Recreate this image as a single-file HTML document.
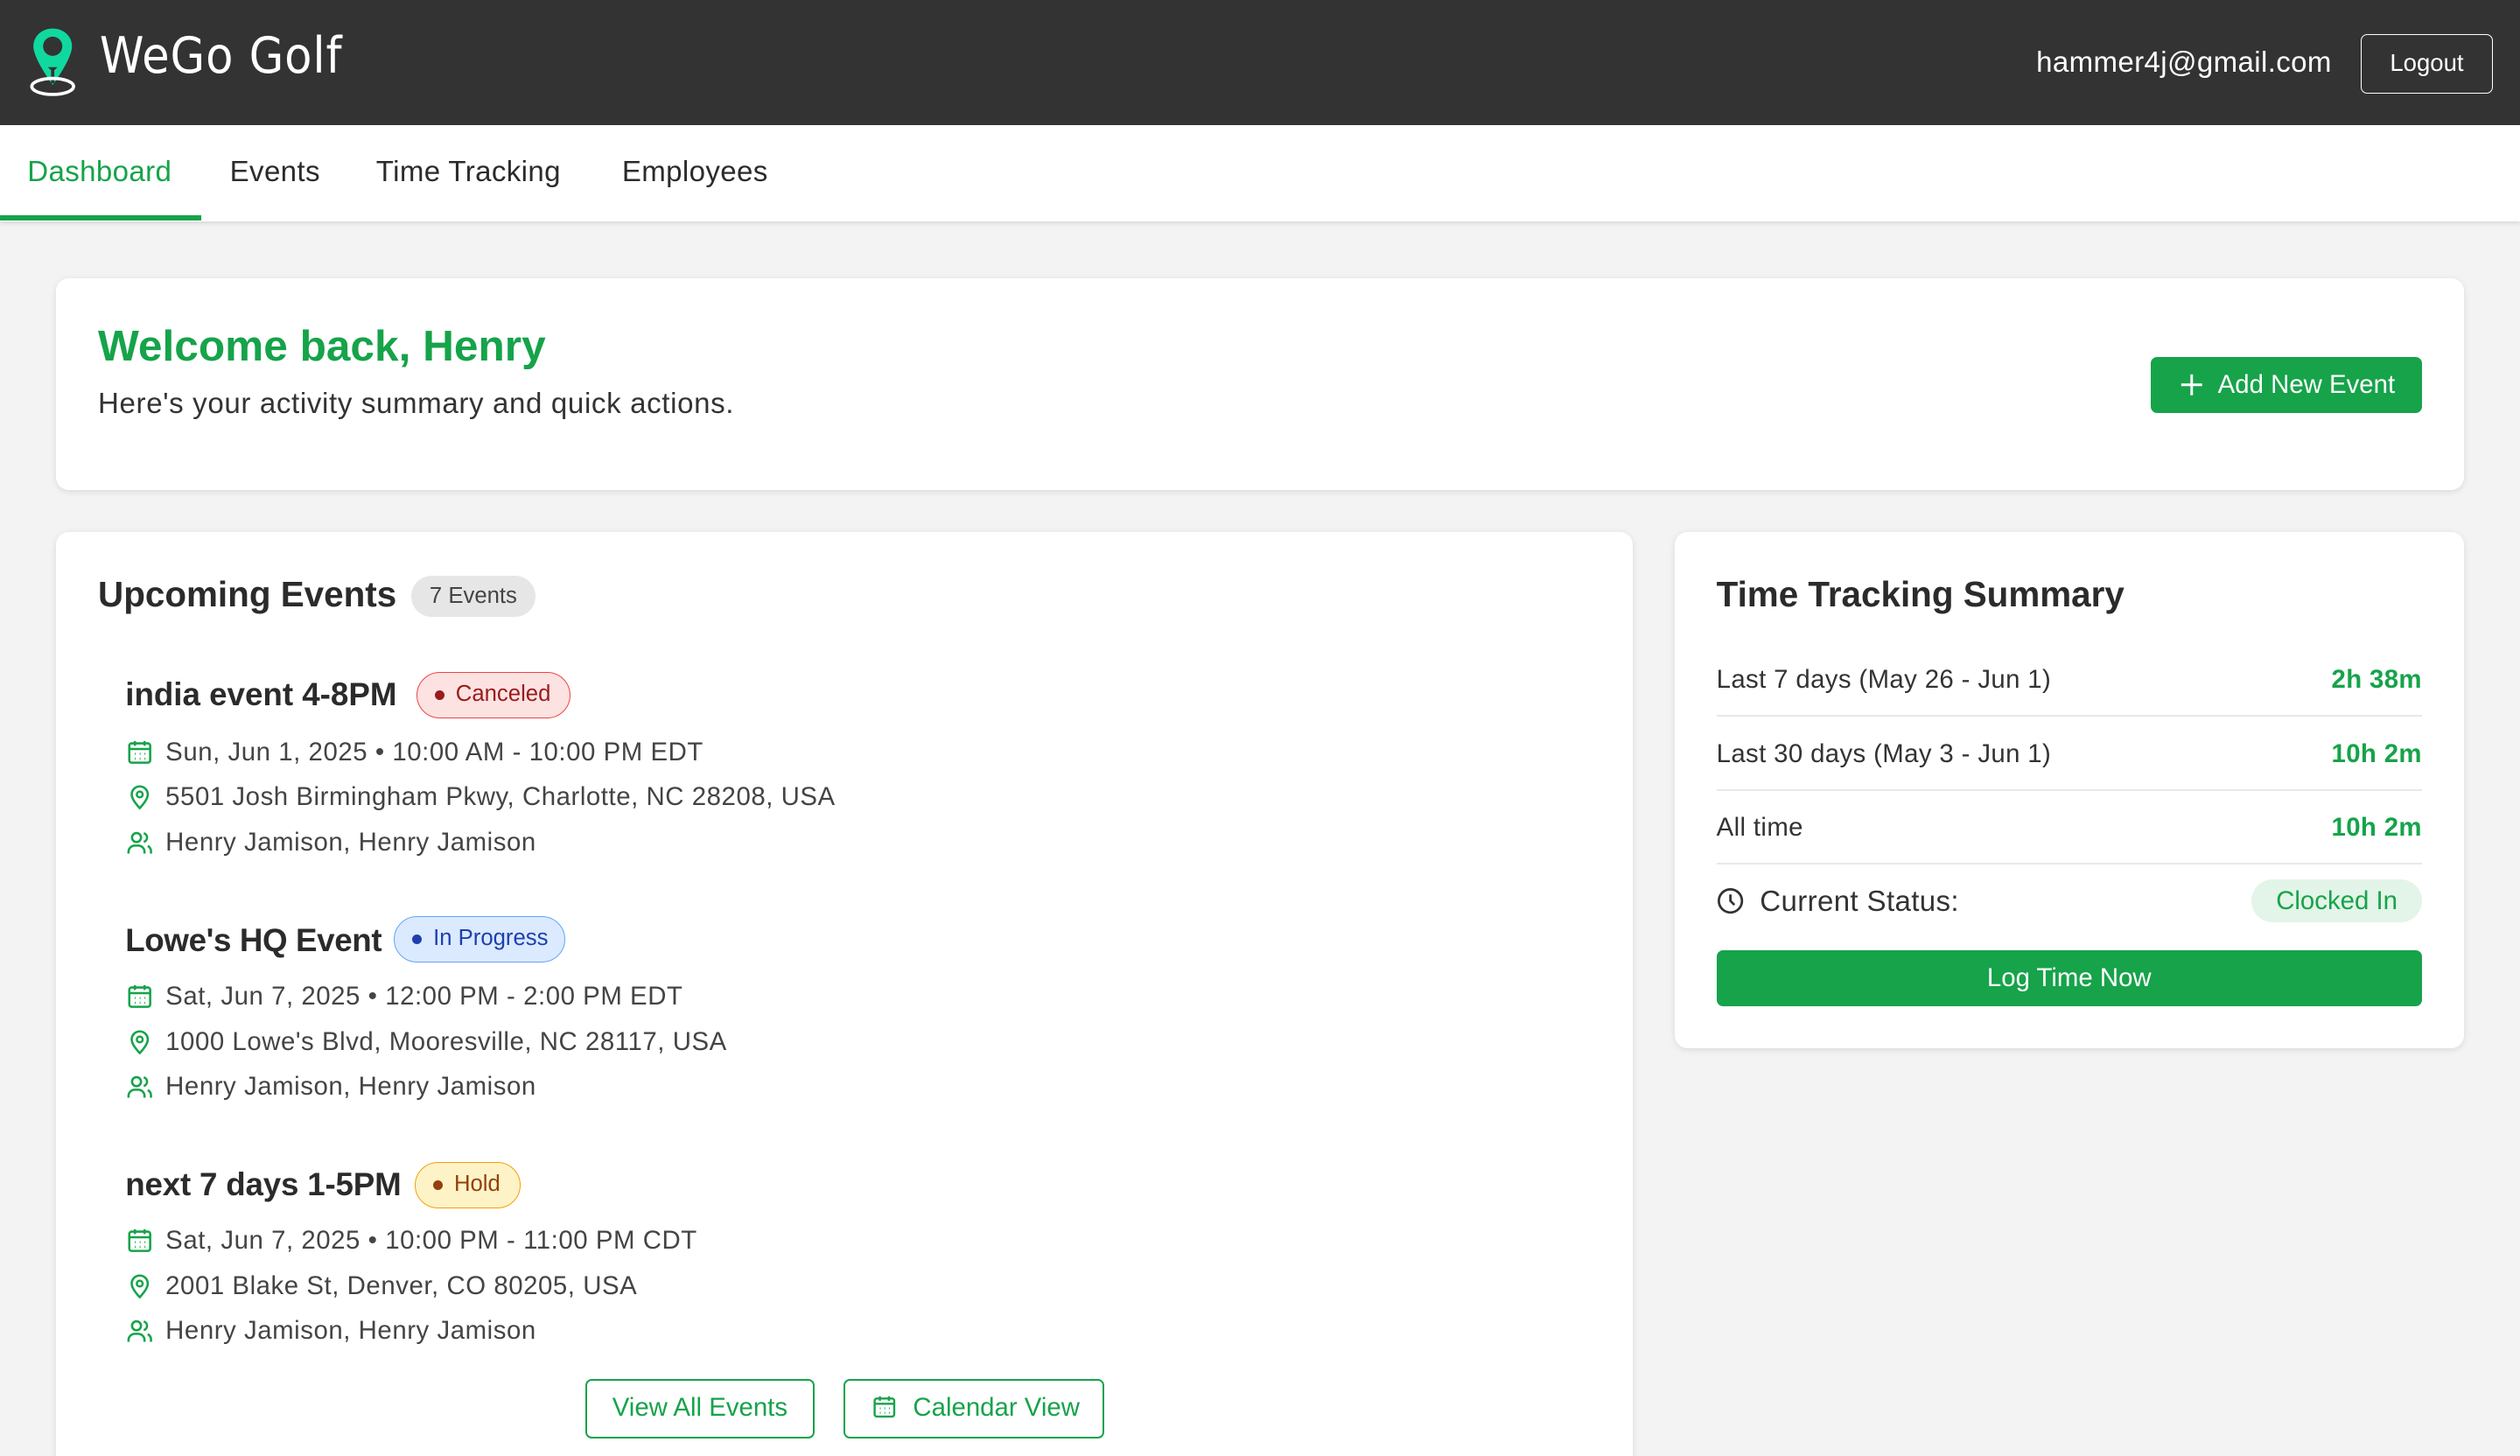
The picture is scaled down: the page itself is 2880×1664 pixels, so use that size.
<!DOCTYPE html>
<html><head><meta charset="utf-8"><style>
*{box-sizing:border-box;margin:0;padding:0}
html,body{width:2880px;height:1664px;overflow:hidden;background:#f3f3f3}
#r{zoom:1.83673;width:1568px;height:906px;position:relative;font-family:"Liberation Sans",Arial,sans-serif;color:#2b2b2b;overflow:hidden}
.a{position:absolute}
.hdr{left:0;top:0;width:1568px;height:78px;background:#333}
.nav{left:0;top:78px;width:1568px;height:60px;background:#fff;box-shadow:0 1px 3px rgba(0,0,0,.12)}
.nav span{position:absolute;top:19px;font-size:18px;color:#2b2b2b;letter-spacing:0.2px}
.card{background:#fff;border-radius:8px;box-shadow:0 1px 4px rgba(0,0,0,.1)}
.t{font-size:16px;color:#444;letter-spacing:0.3px}
.ev{font-size:20px;font-weight:bold;color:#2b2b2b}
.badge{position:absolute;height:29px;border-radius:15px;font-size:14px;line-height:27px;padding:0 12px 0 24px}
.badge:before{content:"";position:absolute;left:11px;top:11px;width:6px;height:6px;border-radius:50%;background:currentColor}
.ic{position:absolute;width:16px;height:16px}
.row{position:absolute;left:1068px;width:439px;font-size:16px;color:#333;letter-spacing:0.2px}
.row b{position:absolute;right:0;color:#16a34a}
.ln{position:absolute;left:1068px;width:439px;height:1px;background:#e8e8e8}
</style></head><body><div id="r">
<div class="a hdr"></div>
<svg class="a" style="left:16px;top:16px" width="34" height="46" viewBox="0 0 34 46"><path d="M17 2C10 2 5 7 5 13c0 8 12 24 12 24s12-16 12-24C29 7 24 2 17 2z" fill="#10d9a0"/><circle cx="17" cy="13" r="6" fill="#333"/><path d="M14 26h6l-2 2v8h-2v-8z" fill="#333"/><ellipse cx="17" cy="38" rx="13" ry="5" fill="none" stroke="#fff" stroke-width="2"/></svg>
<div class="a" style="left:62px;top:17px;font-size:31px;color:#fff;font-family:'DejaVu Sans Condensed','DejaVu Sans',sans-serif;letter-spacing:0.5px">WeGo Golf</div>
<div class="a" style="left:1267px;top:29px;font-size:18px;color:#fff;letter-spacing:0.2px">hammer4j@gmail.com</div>
<div class="a" style="left:1469px;top:21px;width:82px;height:37px;border:1px solid #fff;border-radius:4px;color:#fff;font-size:15px;text-align:center;line-height:35px">Logout</div>
<div class="a nav"><span style="left:17px;color:#16a34a">Dashboard</span><span style="left:143px">Events</span><span style="left:234px">Time Tracking</span><span style="left:387px">Employees</span><div class="a" style="left:0;top:56px;width:125px;height:3px;background:#16a34a"></div></div>

<div class="a card" style="left:35px;top:173px;width:1498px;height:132px"></div>
<div class="a" style="left:61px;top:199px;font-size:27px;font-weight:bold;color:#16a34a">Welcome back, Henry</div>
<div class="a" style="left:61px;top:241px;font-size:18px;color:#333;letter-spacing:0.35px">Here's your activity summary and quick actions.</div>
<div class="a" style="left:1338px;top:222px;width:169px;height:35px;background:#16a34a;border-radius:4px;color:#fff;font-size:16px;line-height:35px;padding-left:42px">Add New Event</div>
<svg class="a" style="left:1356px;top:232px" width="15" height="15" viewBox="0 0 15 15"><path d="M7.5 1v13M1 7.5h13" stroke="#fff" stroke-width="1.6"/></svg>

<div class="a card" style="left:35px;top:331px;width:981px;height:620px"></div>
<div class="a" style="left:61px;top:357px;font-size:22px;font-weight:bold;color:#2b2b2b">Upcoming Events</div>
<div class="a" style="left:256px;top:358px;width:77px;height:26px;border-radius:13px;background:#e6e6e6;font-size:14px;color:#444;text-align:center;line-height:26px">7 Events</div>

<div class="a ev" style="left:78px;top:421px">india event 4-8PM</div>
<div class="badge" style="left:259px;top:418px;background:#fde2e2;border:1px solid #ef4444;color:#991b1b">Canceled</div>
<div class="a ev" style="left:78px;top:574px;letter-spacing:-0.2px">Lowe's HQ Event</div>
<div class="badge" style="left:245px;top:570px;background:#dbeafe;border:1px solid #60a5fa;color:#1e40af;padding-right:10px">In Progress</div>
<div class="a ev" style="left:78px;top:726px;letter-spacing:-0.1px">next 7 days 1-5PM</div>
<div class="badge" style="left:258px;top:723px;background:#fef3c7;border:1px solid #f59e0b;color:#92400e">Hold</div>

<div class="a t" style="left:103px;top:459px">Sun, Jun 1, 2025 • 10:00 AM - 10:00 PM EDT</div>
<div class="a t" style="left:103px;top:487px">5501 Josh Birmingham Pkwy, Charlotte, NC 28208, USA</div>
<div class="a t" style="left:103px;top:515px">Henry Jamison, Henry Jamison</div>
<div class="a t" style="left:103px;top:611px">Sat, Jun 7, 2025 • 12:00 PM - 2:00 PM EDT</div>
<div class="a t" style="left:103px;top:639px">1000 Lowe's Blvd, Mooresville, NC 28117, USA</div>
<div class="a t" style="left:103px;top:667px">Henry Jamison, Henry Jamison</div>
<div class="a t" style="left:103px;top:763px">Sat, Jun 7, 2025 • 10:00 PM - 11:00 PM CDT</div>
<div class="a t" style="left:103px;top:791px">2001 Blake St, Denver, CO 80205, USA</div>
<div class="a t" style="left:103px;top:819px">Henry Jamison, Henry Jamison</div>

<svg width="0" height="0" style="position:absolute"><defs>
<g id="cal" fill="none" stroke="#16a34a" stroke-width="1.4"><rect x="1.5" y="2.5" width="13" height="12" rx="1.5"/><path d="M1.5 6h13M5 1v3M11 1v3"/><path d="M5 9h.5M8 9h.5M11 9h.5M5 12h.5M8 12h.5M11 12h.5" stroke-width="1.3"/></g>
<g id="pin" fill="none" stroke="#16a34a" stroke-width="1.4"><path d="M8 15s5-5 5-8.5A5 5 0 0 0 3 6.5C3 10 8 15 8 15z"/><circle cx="8" cy="6.5" r="1.8"/></g>
<g id="ppl" fill="none" stroke="#16a34a" stroke-width="1.4"><circle cx="6" cy="5" r="2.8"/><path d="M1 15v-1a4 4 0 0 1 4-4h2a4 4 0 0 1 4 4v1M10.5 2.3a2.8 2.8 0 0 1 0 5.4M13 10.2a4 4 0 0 1 2 3.8v1"/></g>
</defs></svg>
<svg class="ic" style="left:79px;top:460px"><use href="#cal"/></svg>
<svg class="ic" style="left:79px;top:488px"><use href="#pin"/></svg>
<svg class="ic" style="left:79px;top:516px"><use href="#ppl"/></svg>
<svg class="ic" style="left:79px;top:612px"><use href="#cal"/></svg>
<svg class="ic" style="left:79px;top:640px"><use href="#pin"/></svg>
<svg class="ic" style="left:79px;top:668px"><use href="#ppl"/></svg>
<svg class="ic" style="left:79px;top:764px"><use href="#cal"/></svg>
<svg class="ic" style="left:79px;top:792px"><use href="#pin"/></svg>
<svg class="ic" style="left:79px;top:820px"><use href="#ppl"/></svg>

<div class="a" style="left:364px;top:858px;width:143px;height:37px;border:1.5px solid #16a34a;border-radius:4px;color:#16a34a;font-size:16px;text-align:center;line-height:34px">View All Events</div>
<div class="a" style="left:525px;top:858px;width:162px;height:37px;border:1.5px solid #16a34a;border-radius:4px;color:#16a34a;font-size:16px;line-height:34px;padding-left:42px">Calendar View</div>
<svg class="ic" style="left:543px;top:868px;width:15px;height:15px" viewBox="0 0 16 16"><use href="#cal"/></svg>

<div class="a card" style="left:1042px;top:331px;width:491px;height:321px"></div>
<div class="a" style="left:1068px;top:357px;font-size:22px;font-weight:bold;color:#2b2b2b">Time Tracking Summary</div>
<div class="row" style="top:414px">Last 7 days (May 26 - Jun 1)<b>2h 38m</b></div>
<div class="ln" style="top:445px"></div>
<div class="row" style="top:460px">Last 30 days (May 3 - Jun 1)<b>10h 2m</b></div>
<div class="ln" style="top:491px"></div>
<div class="row" style="top:506px">All time<b>10h 2m</b></div>
<div class="ln" style="top:537px"></div>
<svg class="a" style="left:1068px;top:552px" width="17" height="17" viewBox="0 0 17 17"><circle cx="8.5" cy="8.5" r="7.2" fill="none" stroke="#333" stroke-width="1.5"/><path d="M8.5 4.5v4l2.5 2.5" fill="none" stroke="#333" stroke-width="1.5"/></svg>
<div class="a" style="left:1095px;top:551px;font-size:18px;color:#333;letter-spacing:0.2px">Current Status:</div>
<div class="a" style="left:1401px;top:547px;width:106px;height:27px;border-radius:14px;background:#e3f4e8;color:#16a34a;font-size:16px;text-align:center;line-height:27px">Clocked In</div>
<div class="a" style="left:1068px;top:591px;width:439px;height:35px;background:#16a34a;border-radius:4px;color:#fff;font-size:16px;text-align:center;line-height:35px">Log Time Now</div>
</div></body></html>
